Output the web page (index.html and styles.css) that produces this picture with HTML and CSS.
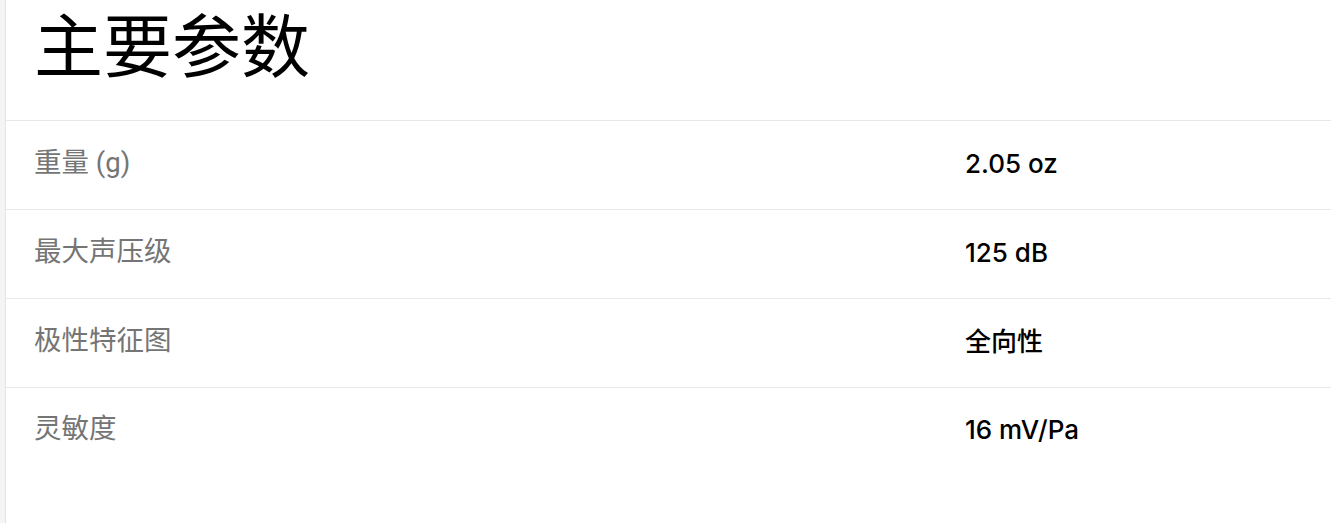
FILE: index.html
```html
<!DOCTYPE html>
<html lang="zh-CN">
<head>
  <meta charset="UTF-8">
  <meta name="viewport" content="width=device-width, initial-scale=1" />
  <title>主要参数</title>
  <link rel="stylesheet" href="styles.css">
</head>
<body>
  <div class="specs">
    <h2 class="specs-title">主要参数</h2>
    <div class="spec-row">
      <div class="spec-label">重量 (g)</div>
      <div class="spec-value">2.05 oz</div>
    </div>
    <div class="spec-row">
      <div class="spec-label">最大声压级</div>
      <div class="spec-value">125 dB</div>
    </div>
    <div class="spec-row">
      <div class="spec-label">极性特征图</div>
      <div class="spec-value">全向性</div>
    </div>
    <div class="spec-row">
      <div class="spec-label">灵敏度</div>
      <div class="spec-value">16 mV/Pa</div>
    </div>
  </div>
</body>
</html>
```

FILE: styles.css
```css
body {
  margin: 0;
  background: #f4f4f4;
  font-family: "Inter", "Noto Sans CJK SC", sans-serif;
}

.specs {
  margin-left: 5px;
  min-height: 523px;
  background: #fff;
  border-left: 1px solid #e4e4e4;
}

.specs-title {
  margin: 0;
  height: 120px;
  padding-left: 28px;
  font-family: "Noto Sans CJK SC", sans-serif;
  font-size: 69px;
  font-weight: 400;
  line-height: 84px;
  color: #000;
}

.spec-row {
  display: grid;
  grid-template-columns: 931px 1fr;
  height: 88px;
  align-items: center;
  padding-left: 28px;
  border-top: 1px solid #e8e8e8;
}

.spec-label {
  font-family: "Roboto", "Noto Sans CJK SC", sans-serif;
  font-size: 27.5px;
  line-height: 1;
  padding-bottom: 4px;
  color: #757575;
}

.spec-value {
  font-size: 26px;
  font-weight: 500;
  line-height: 1;
  padding-bottom: 2px;
  color: #000;
}

.spec-row:last-child {
  height: 86px;
}
```
